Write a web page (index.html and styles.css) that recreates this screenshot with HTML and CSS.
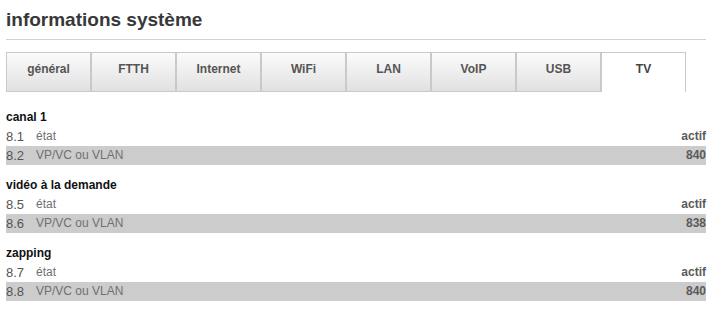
FILE: index.html
```html
<!DOCTYPE html>
<html>
  <head>
    <meta charset='utf-8'>
    <title>informations système</title>
    <link rel="stylesheet" href="styles.css">
  </head>
  <body>
    <div id='page'>
      <h1 id='title'>informations système</h1>
      <div id='tabs'>
        <div class='tab'>général</div>
        <div class='tab'>FTTH</div>
        <div class='tab'>Internet</div>
        <div class='tab'>WiFi</div>
        <div class='tab'>LAN</div>
        <div class='tab'>VoIP</div>
        <div class='tab'>USB</div>
        <div class='tab active'>TV</div>
      </div>

      <div class='section'>
        <h2>canal 1</h2>
        <div class='row'><span class='num'>8.1</span><span class='label'>état</span><span class='value'>actif</span></div>
        <div class='row alt'><span class='num'>8.2</span><span class='label'>VP/VC ou VLAN</span><span class='value'>840</span></div>
      </div>

      <div class='section'>
        <h2>vidéo à la demande</h2>
        <div class='row'><span class='num'>8.5</span><span class='label'>état</span><span class='value'>actif</span></div>
        <div class='row alt'><span class='num'>8.6</span><span class='label'>VP/VC ou VLAN</span><span class='value'>838</span></div>
      </div>

      <div class='section'>
        <h2>zapping</h2>
        <div class='row'><span class='num'>8.7</span><span class='label'>état</span><span class='value'>actif</span></div>
        <div class='row alt'><span class='num'>8.8</span><span class='label'>VP/VC ou VLAN</span><span class='value'>840</span></div>
      </div>
    </div>
  </body>
</html>
```

FILE: styles.css
```css
body {
  margin: 0;
  background: #fff;
  font-family: "Liberation Sans", Arial, sans-serif;
}

#page {
  width: 700px;
  padding: 0 6px;
}

#title {
  margin: 0;
  padding: 8px 0 7px;
  font-size: 19px;
  line-height: 24px;
  font-weight: bold;
  color: #383838;
  border-bottom: 1px solid #d2d2d2;
}

#tabs {
  display: flex;
  margin: 12px 0 16px;
}

.tab {
  width: 85px;
  height: 40px;
  box-sizing: border-box;
  border: 1px solid #c9c9c9;
  background: linear-gradient(#fbfbfb, #e1e1e1);
  color: #555;
  font-size: 12px;
  font-weight: bold;
  text-align: center;
  line-height: 32px;
}

.tab.active {
  background: #fff;
  border-bottom: none;
  color: #444;
}

.section {
  margin-bottom: 11px;
}

.section h2 {
  margin: 0;
  font-size: 12px;
  line-height: 19px;
  font-weight: bold;
  color: #111;
}

.row {
  display: flex;
  height: 19px;
  line-height: 19px;
  font-size: 12px;
}

.row.alt {
  background: #cccccc;
}

.num {
  width: 30px;
  font-size: 13px;
  color: #555;
}

.label {
  flex: 1;
  color: #707070;
}

.value {
  color: #5a5a5a;
  font-weight: bold;
}
```
